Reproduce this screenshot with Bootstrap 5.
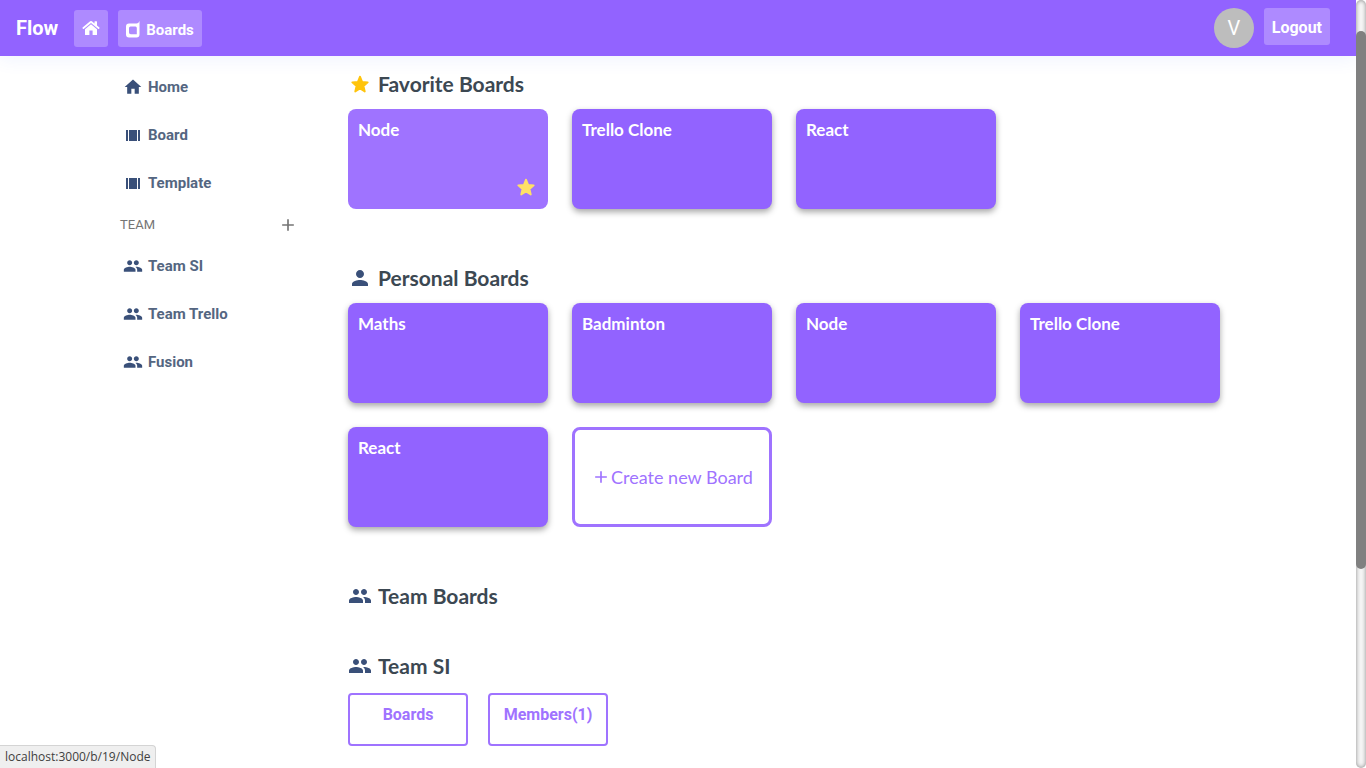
<!DOCTYPE html>
<html lang="en">
<head>
<meta charset="utf-8">
<meta name="viewport" content="width=device-width, initial-scale=1">
<title>Flow</title>
<link href="https://cdn.jsdelivr.net/npm/bootstrap@5.3.0/dist/css/bootstrap.min.css" rel="stylesheet">
<script src="https://cdn.jsdelivr.net/npm/bootstrap@5.3.0/dist/js/bootstrap.bundle.min.js" defer></script>
<style>
  :root { --flow: #9263ff; --flow-light: #9f73ff; --icon-navy: #3a5079; }
  body { font-family: Roboto, "Liberation Sans", sans-serif; background: #fff; }
  a { text-decoration: none; }
  svg { flex: none; display: block; fill: currentColor; }

  .topbar { min-height: 56px; padding: 8px 26px 8px 16px; background: var(--flow); box-shadow: 0 4px 16px rgba(70, 110, 255, .08); }
  .topbar .navbar-brand { padding: 0 16px 0 0; font-size: 20px; font-weight: 700; line-height: 40px; color: #fff; }
  .bar-group { gap: 10px; }
  .bar-btn { height: 37px; padding: 2px 8px 0; border: 0; border-radius: 3px; background: #ae8aff; color: #fff; font-size: 16px; font-weight: 700; line-height: 24px; }
  .bar-btn:hover { background: #b696ff; color: #fff; }
  .bar-home { padding-top: 0; }
  .bar-boards { padding-top: 3px; gap: 6px; font-size: 15px; }
  .avatar { width: 40px; height: 40px; background: #bdbdbd; color: #fff; font-size: 20px; }

  .sidebar { width: 204px; padding-top: 7px; }
  .side-link { height: 48px; padding-left: 3px; gap: 5px; color: #546681; font-size: 15px; font-weight: 700; }
  .side-link svg { color: var(--icon-navy); }
  .team-head { height: 35px; padding-right: 26px; color: #757575; font-size: 13px; }
  .plain-btn { border: 0; padding: 0; background: none; color: #757575; }

  .boards-area { padding-top: 16px; }
  .section-gap { margin-bottom: 57px; }
  .team-gap { margin-bottom: 46px; }
  .section-title { font-family: Lato, "Open Sans", sans-serif; font-size: 21px; font-weight: 700; line-height: 24px; color: #3c4852; gap: 6px; margin: 0 0 13px; }
  .section-title svg { color: var(--icon-navy); }
  .section-title .gold { color: #ffc40c; }
  .board-grid { display: grid; grid-template-columns: repeat(auto-fill, 200px); gap: 24px; }
  .board-tile { height: 100px; padding: 9px 10px; border-radius: 8px; background: var(--flow); color: #fff; font-family: Lato, "Open Sans", sans-serif; font-size: 17px; font-weight: 700; line-height: 24px; box-shadow: 0 3px 6px rgba(0, 0, 0, .35); }
  .board-tile.hovered, .board-tile:hover { background: var(--flow-light); color: #fff; box-shadow: none; }
  .board-tile .fav { color: #ffe066; margin: 0 1px 2px 0; }
  .create-tile { height: 100px; padding: 0; border: 3px solid var(--flow-light); border-radius: 8px; background: #fff; color: var(--flow-light); font-family: Lato, "Open Sans", sans-serif; font-size: 18px; line-height: 24px; }
  .tab-row { gap: 20px; padding-top: 2px; }
  .tab-btn { width: 120px; height: 53px; padding: 0 0 10px; border: 2px solid var(--flow-light); border-radius: 4px; background: #fff; color: var(--flow-light); font-size: 16px; font-weight: 700; }

  .scroll-track { width: 10px; border-radius: 5px; background: #f5f5f5; box-shadow: inset 0 0 4px rgba(0, 0, 0, .45); padding-top: 31px; }
  .scroll-thumb { height: 73%; border-radius: 5px; background: #808080; }
  .url-hint { padding: 0 5px; height: 23px; border: 1px solid #d4d4d4; border-width: 1px 1px 0 0; border-radius: 0 4px 0 0; background: #efefef; color: #404040; font-family: "Open Sans", "Noto Sans", sans-serif; font-size: 12px; line-height: 22px; }
</style>
</head>
<body>
<svg class="d-none" aria-hidden="true">
  <symbol id="i-house" viewBox="0 0 24 24"><path d="M10 20v-6h4v6h5v-8h3L12 3 2 12h3v8z"/></symbol>
  <symbol id="i-columns" viewBox="0 0 20 20"><path d="M6 5h8v11H6zM3 5h2v11H3zM15 5h2v11h-2z"/></symbol>
  <symbol id="i-group" viewBox="0 0 24 24"><path d="M16 11c1.660 0 2.990-1.340 2.990-3S17.660 5 16 5s-3 1.340-3 3 1.340 3 3 3zm-8 0c1.660 0 2.990-1.340 2.990-3S9.660 5 8 5 5 6.340 5 8s1.340 3 3 3zm0 2c-2.330 0-7 1.170-7 3.500V19h14v-2.500C15 14.170 10.330 13 8 13zm8 0c-.290 0-.620.020-.970.050C16.190 13.890 17 15.020 17 16.500V19h6v-2.500c0-2.330-4.670-3.500-7-3.500z"/></symbol>
  <symbol id="i-person" viewBox="0 0 24 24"><path d="M12 12c2.210 0 4-1.790 4-4s-1.790-4-4-4-4 1.790-4 4 1.790 4 4 4zm0 2c-2.670 0-8 1.340-8 4v2h16v-2c0-2.660-5.330-4-8-4z"/></symbol>
  <symbol id="i-star" viewBox="0 0 24 24"><path stroke="currentColor" stroke-width="2" stroke-linejoin="round" d="M12 17 17.200 20.200l-1.400-6L20.400 10.200l-6.100-.5L12 4 9.700 9.700l-6.100.5 4.600 4L6.800 20.200z"/></symbol>
  <symbol id="i-plus" viewBox="0 0 24 24"><path d="M19 13h-6v6h-2v-6H5v-2h6V5h2v6h6z"/></symbol>
</svg>

<div class="d-flex vh-100 overflow-hidden">
  <div class="flex-grow-1 d-flex flex-column overflow-hidden">
    <nav class="topbar navbar flex-nowrap align-items-start position-relative">
      <div class="d-flex">
        <a class="navbar-brand m-0" href="#">Flow</a>
        <div class="bar-group d-flex align-items-center">
          <a class="bar-btn bar-home d-flex align-items-center" href="#" aria-label="Home">
            <svg width="18" height="16" viewBox="0 0 18 16"><path d="M9 4.200 3 9.300V14.500q0 .5.500.5H7.400V10.600h3.200V15h3.900q.5 0 .5-.5V9.300z"/><path d="M8.100 1.300Q9 .600 9.900 1.300L12.500 3.500V1.700q0-.4.400-.4h1.700q.4 0 .4.400v3.900l2.400 2q.3.300.100.600l-.6.700q-.3.300-.6 0L9 2.900 1.700 8.900q-.3.300-.6 0L.500 8.200q-.200-.300.100-.6z"/></svg>
          </a>
          <a class="bar-btn bar-boards d-flex align-items-center" href="#">
            <svg width="14" height="17" viewBox="0 0 14 17"><path fill-rule="evenodd" d="M13.500 0v13.500q0 3-3 3H3q-3 0-3-3V5.500q0-3 3-3h7.500Q12.500 2.500 13.500 0zM4.500 5.500Q3 5.500 3 7v4.500Q3 13.200 4.800 13.200h6V7q0-1.500-1.300-1.500z"/></svg>
            Boards
          </a>
        </div>
      </div>
      <div class="bar-group d-flex">
        <div class="avatar rounded-circle d-flex align-items-center justify-content-center">V</div>
        <button class="bar-btn" type="button">Logout</button>
      </div>
    </nav>

    <div class="container d-flex gap-4">
      <aside class="sidebar flex-shrink-0">
        <a class="side-link d-flex align-items-center" href="#"><svg width="20" height="20"><use href="#i-house"/></svg>Home</a>
        <a class="side-link d-flex align-items-center" href="#"><svg width="20" height="20"><use href="#i-columns"/></svg>Board</a>
        <a class="side-link d-flex align-items-center" href="#"><svg width="20" height="20"><use href="#i-columns"/></svg>Template</a>
        <div class="team-head d-flex align-items-center justify-content-between">
          <span>TEAM</span>
          <button class="plain-btn" type="button" aria-label="Add team"><svg width="20" height="20"><use href="#i-plus"/></svg></button>
        </div>
        <a class="side-link d-flex align-items-center" href="#"><svg width="20" height="20"><use href="#i-group"/></svg>Team SI</a>
        <a class="side-link d-flex align-items-center" href="#"><svg width="20" height="20"><use href="#i-group"/></svg>Team Trello</a>
        <a class="side-link d-flex align-items-center" href="#"><svg width="20" height="20"><use href="#i-group"/></svg>Fusion</a>
      </aside>

      <main class="boards-area flex-grow-1">
        <section class="section-gap">
          <h2 class="section-title d-flex align-items-center"><svg class="gold" width="24" height="22"><use href="#i-star"/></svg>Favorite Boards</h2>
          <div class="board-grid">
            <a class="board-tile hovered d-flex flex-column justify-content-between" href="#">Node<svg class="fav align-self-end" width="22" height="22"><use href="#i-star"/></svg></a>
            <a class="board-tile" href="#">Trello Clone</a>
            <a class="board-tile" href="#">React</a>
          </div>
        </section>
        <section class="section-gap">
          <h2 class="section-title d-flex align-items-center"><svg width="24" height="24"><use href="#i-person"/></svg>Personal Boards</h2>
          <div class="board-grid">
            <a class="board-tile" href="#">Maths</a>
            <a class="board-tile" href="#">Badminton</a>
            <a class="board-tile" href="#">Node</a>
            <a class="board-tile" href="#">Trello Clone</a>
            <a class="board-tile" href="#">React</a>
            <button class="create-tile d-flex align-items-center justify-content-center" type="button"><svg width="20" height="20"><use href="#i-plus"/></svg>Create new Board</button>
          </div>
        </section>
        <section class="team-gap">
          <h2 class="section-title d-flex align-items-center mb-0"><svg width="24" height="24"><use href="#i-group"/></svg>Team Boards</h2>
        </section>
        <section>
          <h2 class="section-title d-flex align-items-center"><svg width="24" height="24"><use href="#i-group"/></svg>Team SI</h2>
          <div class="tab-row d-flex">
            <button class="tab-btn" type="button">Boards</button>
            <button class="tab-btn" type="button">Members(1)</button>
          </div>
        </section>
      </main>
    </div>
  </div>
  <div class="scroll-track flex-shrink-0" aria-hidden="true"><div class="scroll-thumb"></div></div>
</div>
<div class="url-hint position-fixed bottom-0 start-0">localhost:3000/b/19/Node</div>
</body>
</html>
